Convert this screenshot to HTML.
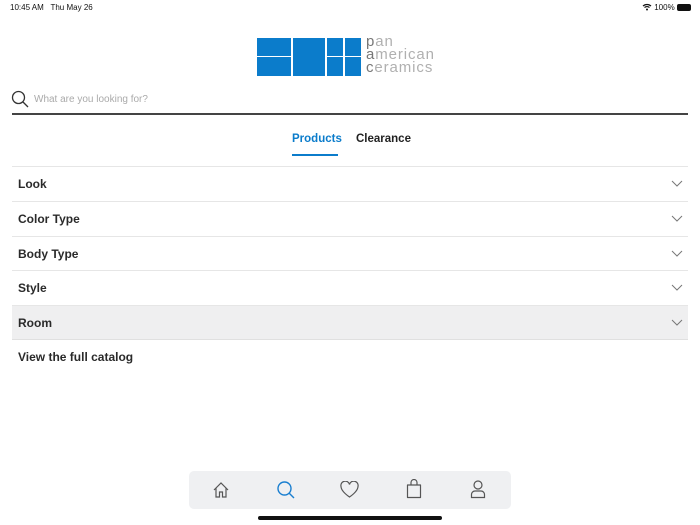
<!DOCTYPE html>
<html><head><style>
*{margin:0;padding:0;box-sizing:border-box}
body{width:700px;height:525px;position:relative;background:#fff;font-family:"Liberation Sans",sans-serif;overflow:hidden;color:#222}
.a{position:absolute}
.b{position:absolute;background:#0b7ccb}
.row{position:absolute;left:12px;width:676px;height:35px;border-top:1px solid #e6e6e6;font-weight:bold;font-size:12px;line-height:34px;padding-left:6px;color:#2a2a2a}
.row svg{position:absolute;right:5px;top:13px}
</style></head><body>
<div class="a" style="left:10px;top:3px;font-size:8px;color:#111">10:45 AM&nbsp;&nbsp;&nbsp;Thu May 26</div>
<div class="a" style="left:642px;top:3px;font-size:8px;color:#111">
<svg width="10" height="8" viewBox="0 0 10 8" style="vertical-align:-1px"><path d="M1 3a6 6 0 0 1 8 0M2.5 4.5a4 4 0 0 1 5 0" stroke="#111" stroke-width="1.2" fill="none"/><circle cx="5" cy="6.5" r="1" fill="#111"/></svg> 100% <span style="display:inline-block;width:14px;height:7px;background:#111;border-radius:2px;vertical-align:-1px"></span></div>
<div class="b" style="left:257px;top:38px;width:34px;height:18px"></div>
<div class="b" style="left:257px;top:57px;width:34px;height:19px"></div>
<div class="b" style="left:293px;top:38px;width:32px;height:38px"></div>
<div class="b" style="left:327px;top:38px;width:16px;height:18px"></div>
<div class="b" style="left:345px;top:38px;width:16px;height:18px"></div>
<div class="b" style="left:327px;top:57px;width:16px;height:19px"></div>
<div class="b" style="left:345px;top:57px;width:16px;height:19px"></div>
<div class="a" style="left:366px;top:35px;font-size:15px;line-height:13px;color:#b0b0b0;letter-spacing:0.9px"><span style="color:#777">p</span>an<br><span style="color:#777">a</span>merican<br><span style="color:#777">c</span>eramics</div>
<svg class="a" style="left:11px;top:90px" width="18" height="18" viewBox="0 0 18 18"><circle cx="7.5" cy="7.5" r="6" stroke="#333" stroke-width="1.3" fill="none"/><path d="M12 12l5 5" stroke="#333" stroke-width="1.3"/></svg>
<div class="a" style="left:34px;top:94px;font-size:10px;color:#aaa">What are you looking for?</div>
<div class="a" style="left:12px;top:113px;width:676px;height:2px;background:#444"></div>
<div class="a" style="left:292px;top:133px;font-size:11.5px;font-weight:bold;color:#0b7ccb">Products</div>
<div class="a" style="left:292px;top:154px;width:46px;height:2px;background:#0b7ccb"></div>
<div class="a" style="left:356px;top:133px;font-size:11.5px;font-weight:bold;color:#222">Clearance</div>
<div class="row" style="top:166px">Look<svg width="12" height="8"><path d="M1 1l5 5 5-5" stroke="#777" fill="none"/></svg></div>
<div class="row" style="top:201px">Color Type<svg width="12" height="8"><path d="M1 1l5 5 5-5" stroke="#777" fill="none"/></svg></div>
<div class="row" style="top:236px">Body Type<svg width="12" height="8"><path d="M1 1l5 5 5-5" stroke="#777" fill="none"/></svg></div>
<div class="row" style="top:270px">Style<svg width="12" height="8"><path d="M1 1l5 5 5-5" stroke="#777" fill="none"/></svg></div>
<div class="row" style="top:305px;background:#efeff0;border-bottom:1px solid #e0e0e0">Room<svg width="12" height="8"><path d="M1 1l5 5 5-5" stroke="#777" fill="none"/></svg></div>
<div class="a" style="left:18px;top:350px;font-size:12px;font-weight:bold;color:#2a2a2a">View the full catalog</div>
<div class="a" style="left:189px;top:471px;width:322px;height:38px;background:#eff0f2;border-radius:5px"></div>
<svg class="a" style="left:212px;top:481px" width="18" height="18" viewBox="0 0 18 18"><path d="M2 9L9 2l7 7M4 7v9h3.5v-5h3v5H14V7" stroke="#555" stroke-width="1.2" fill="none"/></svg>
<svg class="a" style="left:276px;top:480px" width="20" height="20" viewBox="0 0 20 20"><circle cx="8.5" cy="8.5" r="6.5" stroke="#1a7fd0" stroke-width="1.4" fill="none"/><path d="M13 13l5 5" stroke="#1a7fd0" stroke-width="1.4"/></svg>
<svg class="a" style="left:340px;top:481px" width="19" height="17" viewBox="0 0 19 17"><path d="M9.5 16S1 10.5 1 5.5A4 4 0 0 1 9.5 3.5 4 4 0 0 1 18 5.5C18 10.5 9.5 16 9.5 16z" stroke="#555" stroke-width="1.2" fill="none"/></svg>
<svg class="a" style="left:405px;top:479px" width="18" height="20" viewBox="0 0 18 20"><path d="M2.5 6h13v12.5h-13zM6 6V3.5a3 3 0 0 1 6 0V6" stroke="#555" stroke-width="1.2" fill="none" stroke-linejoin="round"/></svg>
<svg class="a" style="left:469px;top:479px" width="18" height="20" viewBox="0 0 18 20"><circle cx="9" cy="6" r="4" stroke="#555" stroke-width="1.2" fill="none"/><path d="M2.5 18.5v-3a3.5 3.5 0 0 1 3.5-3.5h6a3.5 3.5 0 0 1 3.5 3.5v3z" stroke="#555" stroke-width="1.2" fill="none"/></svg>
<div class="a" style="left:258px;top:516px;width:184px;height:4px;background:#111;border-radius:2px"></div>
</body></html>
